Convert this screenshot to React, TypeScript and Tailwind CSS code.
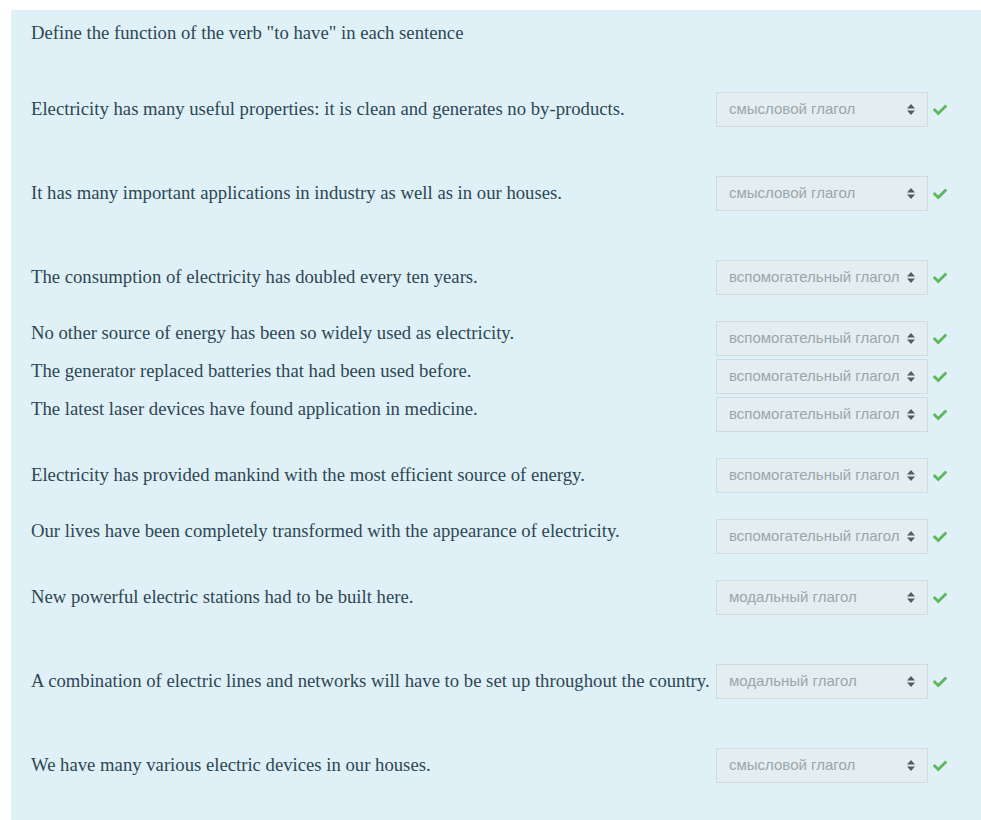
import { FaCheck } from "react-icons/fa";

type Row = { text: string; answer: string; gap: string; lift?: boolean };

const rows: Row[] = [
  { text: "Electricity has many useful properties: it is clean and generates no by-products.", answer: "смысловой глагол", gap: "mt-[49px]" },
  { text: "It has many important applications in industry as well as in our houses.", answer: "смысловой глагол", gap: "mt-[49px]" },
  { text: "The consumption of electricity has doubled every ten years.", answer: "вспомогательный глагол", gap: "mt-[49px]" },
  { text: "No other source of energy has been so widely used as electricity.", answer: "вспомогательный глагол", gap: "mt-[26px]", lift: true },
  { text: "The generator replaced batteries that had been used before.", answer: "вспомогательный глагол", gap: "mt-[3px]", lift: true },
  { text: "The latest laser devices have found application in medicine.", answer: "вспомогательный глагол", gap: "mt-[3px]", lift: true },
  { text: "Electricity has provided mankind with the most efficient source of energy.", answer: "вспомогательный глагол", gap: "mt-[26px]" },
  { text: "Our lives have been completely transformed with the appearance of electricity.", answer: "вспомогательный глагол", gap: "mt-[26px]", lift: true },
  { text: "New powerful electric stations had to be built here.", answer: "модальный глагол", gap: "mt-[26px]" },
  { text: "A combination of electric lines and networks will have to be set up throughout the country.", answer: "модальный глагол", gap: "mt-[49px]" },
  { text: "We have many various electric devices in our houses.", answer: "смысловой глагол", gap: "mt-[49px]" },
];

function SortArrows() {
  return (
    <svg width="8" height="11" viewBox="0 0 8 11" className="shrink-0">
      <path d="M4 0 L8 4.5 L0 4.5 Z" fill="#555b5e" />
      <path d="M4 11 L8 6.5 L0 6.5 Z" fill="#555b5e" />
    </svg>
  );
}

export default function App() {
  return (
    <div className="min-h-[820px] bg-white pt-[10px] pl-[11px]">
      <div className="bg-[#dff0f7] pl-[20px] pt-[13px] pb-[48px] text-[#2e4753] font-['Liberation_Serif',serif] text-[18.7px]">
        <div className="leading-[20px]">Define the function of the verb "to have" in each sentence</div>

        {rows.map((r, i) => (
          <div key={i} className={`flex items-center ${r.gap}`}>
            <div className={`w-[685px] shrink-0 whitespace-nowrap leading-[20px] ${r.lift ? "pb-[11px]" : "pb-[1px]"}`}>{r.text}</div>
            <div className="flex h-[35px] w-[212px] shrink-0 items-center justify-between border border-[#cfdbe0] bg-[#e4edf0] pl-[12px] pr-[12px] font-['Liberation_Sans',Arial,sans-serif] text-[15px] text-[#9ba6ab]">
              <span>{r.answer}</span>
              <SortArrows />
            </div>
            <FaCheck className="ml-[5px] text-[#5cb85c]" size={14} />
          </div>
        ))}
      </div>
    </div>
  );
}
